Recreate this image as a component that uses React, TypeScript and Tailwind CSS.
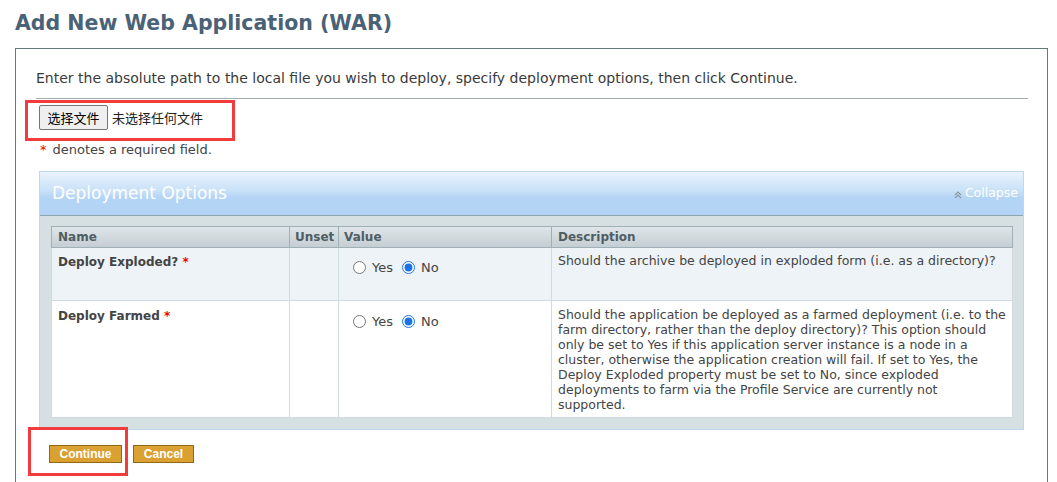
import React from "react";

const font = { fontFamily: '"DejaVu Sans", Verdana, sans-serif' };

function Radio({ checked }: { checked?: boolean }) {
  return (
    <input
      type="radio"
      readOnly
      checked={!!checked}
      className="m-0 h-[13px] w-[13px] accent-[#1a73e8]"
    />
  );
}

function RadioPair() {
  return (
    <div className="flex items-center pl-[14px] pt-[4px] text-[13px] text-[#444]">
      <Radio />
      <span className="ml-[6px]">Yes</span>
      <span className="ml-[9px] flex items-center">
        <Radio checked />
      </span>
      <span className="ml-[6px]">No</span>
    </div>
  );
}

export default function App() {
  return (
    <div className="relative min-h-[482px] bg-white" style={font}>
      <h1 className="pl-[15px] pt-[9px] text-[20.5px] font-bold leading-[28px] text-[#4a6276]">
        Add New Web Application (WAR)
      </h1>
      <div className="ml-[15px] mr-[9px] mt-[11px] h-[440px] border border-b-0 border-[#66777e]">
        <div className="pl-[20px] pr-[19px] pt-[20px]">
          <p className="text-[14px] leading-[19px] text-[#3a3a3a]">
            Enter the absolute path to the local file you wish to deploy, specify deployment options, then click Continue.
          </p>
          <div className="mt-[10px] h-px bg-[#a3adb2]" />
        </div>
        <div className="flex items-center pl-[23px] pt-[6px]">
          <div
            className="flex h-[25px] w-[69px] items-center justify-center rounded-[2px] border border-[#767676] bg-[#efefef] text-[13px] text-black"
            style={{ fontFamily: '"Noto Sans CJK SC", sans-serif' }}
          >
            选择文件
          </div>
          <span
            className="ml-[4px] text-[13px] text-[#222]"
            style={{ fontFamily: '"Noto Sans CJK SC", sans-serif' }}
          >
            未选择任何文件
          </span>
        </div>
        <div className="pl-[24px] pt-[11px] text-[13px] leading-[17px] text-[#444]">
          <span className="text-[#e00]">*</span>
          <span className="ml-[6px]">denotes a required field.</span>
        </div>
        <div className="mx-[23px] mt-[13px] border border-[#bcd7f0]">
          <div className="flex h-[44px] items-center justify-between border-b border-[#8ea6b4] bg-[linear-gradient(#eaf3fd_0%,#c7e0f8_45%,#b3d4f5_60%,#b3d4f5_100%)] pl-[12px] pr-[5px]">
            <span className="text-[17px] text-white">Deployment Options</span>
            <span className="flex items-center text-[12.5px] text-white">
              <svg width="8" height="8" viewBox="0 0 8 8" className="mr-[3px] mt-[2px]">
                <path d="M1 4 L4 1 L7 4 M1 7 L4 4 L7 7" stroke="#8a9aa4" strokeWidth="1.2" fill="none" />
              </svg>
              Collapse
            </span>
          </div>
          <div className="bg-[#d6dfe2] pb-[11px] pl-[11px] pr-[10px] pt-[10px]">
            <table className="w-full border-collapse text-[12px]">
              <thead>
                <tr className="h-[21px] bg-[linear-gradient(#dfe5e8,#c3cdd2)] text-left font-bold text-[#4f5d63]">
                  <th className="w-[238px] border border-[#9fb0b7] pl-[6px] font-bold">Name</th>
                  <th className="w-[49px] border border-[#9fb0b7] pl-[5px] font-bold">Unset</th>
                  <th className="w-[213px] border border-[#9fb0b7] pl-[5px] font-bold">Value</th>
                  <th className="border border-[#9fb0b7] pl-[6px] font-bold">Description</th>
                </tr>
              </thead>
              <tbody>
                <tr className="h-[53px] bg-[#eef3f7] align-top">
                  <td className="border border-[#d0dbe0] pl-[6px] pt-[5px] font-bold text-[#444]">
                    Deploy Exploded? <span className="text-[#e00]">*</span>
                  </td>
                  <td className="border border-[#d0dbe0]" />
                  <td className="border border-[#d0dbe0] pt-[6px]">
                    <RadioPair />
                  </td>
                  <td className="border border-[#d0dbe0] pl-[6px] pt-[5px] text-[12.5px] leading-[15px] text-[#444]">
                    Should the archive be deployed in exploded form (i.e. as a directory)?
                  </td>
                </tr>
                <tr className="bg-white align-top">
                  <td className="border border-[#d0dbe0] pl-[6px] pt-[6px] font-bold text-[#444]">
                    Deploy Farmed <span className="text-[#e00]">*</span>
                  </td>
                  <td className="border border-[#d0dbe0]" />
                  <td className="border border-[#d0dbe0] pt-[7px]">
                    <RadioPair />
                  </td>
                  <td className="border border-[#d0dbe0] pb-[5px] pl-[6px] pr-[4px] pt-[6px] text-[12.5px] leading-[15px] text-[#444]">
                    Should the application be deployed as a farmed deployment (i.e. to the farm directory, rather than the deploy directory)? This option should only be set to Yes if this application server instance is a node in a cluster, otherwise the application creation will fail. If set to Yes, the Deploy Exploded property must be set to No, since exploded deployments to farm via the Profile Service are currently not supported.
                  </td>
                </tr>
              </tbody>
            </table>
          </div>
        </div>
        <div className="flex gap-[11px] pl-[33px] pt-[15px]" style={{ fontFamily: '"Liberation Sans", Arial, sans-serif' }}>
          <div className="flex h-[18px] w-[73px] items-center justify-center border border-[#8f6a12] bg-[#dba032] text-[12px] font-bold text-white">
            Continue
          </div>
          <div className="flex h-[18px] w-[61px] items-center justify-center border border-[#8f6a12] bg-[#dba032] text-[12px] font-bold text-white">
            Cancel
          </div>
        </div>
      </div>
      <div className="pointer-events-none absolute left-[25px] top-[100px] h-[41px] w-[210px] border-[3px] border-[#f23b3b]" />
      <div className="pointer-events-none absolute left-[28px] top-[427px] h-[49px] w-[100px] border-[3px] border-[#f23b3b]" />
    </div>
  );
}
